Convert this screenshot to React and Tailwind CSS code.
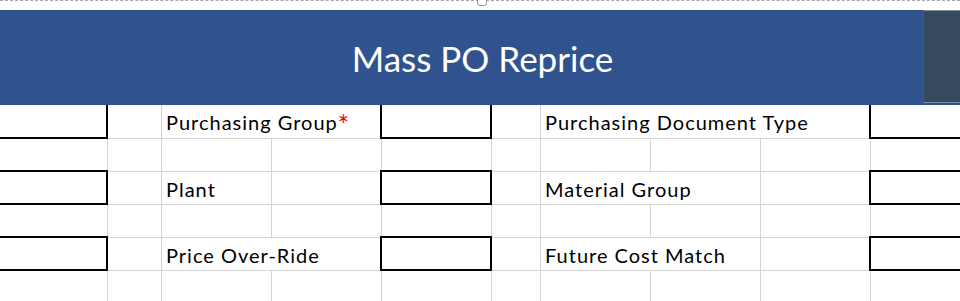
import React from 'react';

const cols = 'grid-cols-[108px_54px_110px_110px_110px_49px_110px_110px_110px_110px]';

const Cell = ({ span = '', pb = 'pb-[5px]', children }) => (
  <div className={`${span} ${pb} border-r border-b border-[#d4d4d4] flex items-end pl-[4px] whitespace-nowrap text-[20px] leading-[20px] tracking-[1px] text-black`}>
    {children}
  </div>
);

const Box = ({ edge }) => (
  <div className={`-mt-[2px] ${edge ? 'border-l-0' : '-ml-[2px]'} border-2 border-black bg-white`} />
);

const blankRow = () => (
  <>
    {Array.from({ length: 10 }).map((_, i) => (
      <Cell key={i} />
    ))}
  </>
);

export default function App() {
  return (
    <div className="w-[960px] h-[301px] overflow-hidden bg-white font-['Lato','Liberation_Sans',sans-serif]">
      <div className="relative h-[10px] border-t border-dashed border-[#a6a6a6]">
        <div className="absolute left-[477px] -top-[6px] w-[10px] h-[11px] rounded-[3px] border border-[#9a9a9a] bg-white" />
      </div>
      <div className="relative h-[95px] bg-[#30538f] flex items-center justify-center pl-[5px] pt-[2px]">
        <span className="text-white text-[35px] leading-none">Mass PO Reprice</span>
        <div className="absolute right-0 top-0 w-[37px] h-[93px] bg-[#364a5e] border-t border-b border-[#7d8ea2] border-l border-l-[#44586d]" />
      </div>
      <div className={`grid ${cols} grid-rows-[34px_33px_33px_33px_33px_33px]`}>
        <Box edge />
        <Cell />
        <Cell span="col-span-2" pb="pb-[6px]">
          <span>
            Purchasing Group<span className="relative top-[3px] align-top text-[#e60000] text-[26px] leading-[20px] tracking-normal">*</span>
          </span>
        </Cell>
        <Box />
        <Cell />
        <Cell span="col-span-3" pb="pb-[6px]">Purchasing Document Type</Cell>
        <Box />
        {blankRow()}
        <Box edge />
        <Cell />
        <Cell>Plant</Cell>
        <Cell />
        <Box />
        <Cell />
        <Cell span="col-span-2">Material Group</Cell>
        <Cell />
        <Box />
        {blankRow()}
        <Box edge />
        <Cell />
        <Cell span="col-span-2">Price Over-Ride</Cell>
        <Box />
        <Cell />
        <Cell span="col-span-2">Future Cost Match</Cell>
        <Cell />
        <Box />
        {blankRow()}
      </div>
    </div>
  );
}
